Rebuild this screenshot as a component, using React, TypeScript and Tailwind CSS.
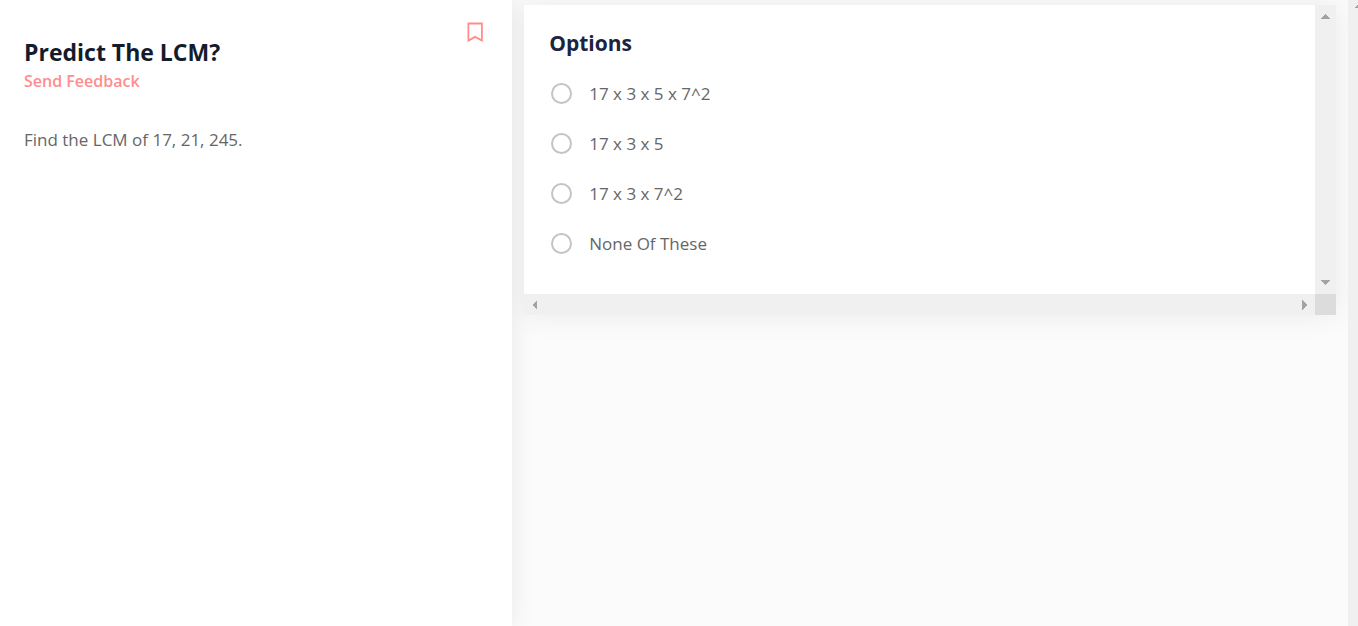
import { useState } from "react";

const options = ["17 x 3 x 5 x 7^2", "17 x 3 x 5", "17 x 3 x 7^2", "None Of These"];

function Arrow({ points, className = "" }: { points: string; className?: string }) {
  return (
    <svg
      viewBox="0 0 10 10"
      className={`size-[10px] shrink-0 fill-[#a3a3a3] ${className}`}
      shapeRendering="crispEdges"
      aria-hidden="true"
    >
      <polygon points={points} />
    </svg>
  );
}

function QuestionPanel() {
  const [saved, setSaved] = useState(false);
  return (
    <section className="flex w-[38%] shrink-0 items-start justify-between bg-white pt-[22px] pr-7 pl-6 shadow-[0_0_24px_rgba(0,0,0,0.08)]">
      <div className="pt-[14px]">
        <h1 className="text-[23px] leading-8 font-bold text-[#141c2c]">Predict The LCM?</h1>
        <a href="#feedback" className="block text-[16px] leading-[26px] font-semibold text-[#ff8d8d]">
          Send Feedback
        </a>
        <p className="mt-[34px] text-[17px] leading-6 text-[#666]">Find the LCM of 17, 21, 245.</p>
      </div>
      <button type="button" aria-label="Bookmark" aria-pressed={saved} onClick={() => setSaved(!saved)}>
        <svg
          viewBox="0 0 18 21"
          className={`h-[21px] w-[18px] stroke-[#ff8d8d] ${saved ? "fill-[#ff8d8d]" : "fill-none"}`}
          strokeWidth="1.8"
        >
          <path d="M2.4 1.5H15.9V18.6L9.1 14.9L2.4 18.6Z" />
        </svg>
      </button>
    </section>
  );
}

function OptionsCard() {
  return (
    <div className="grid grid-cols-[1fr_21px] grid-rows-[1fr_21px] bg-white shadow-[0_0_28px_rgba(0,0,0,0.07)]">
      <fieldset className="px-[25px] pt-[22px] pb-[26px]">
        <legend className="float-left w-full text-[21px] leading-8 font-bold text-[#1b2440]">Options</legend>
        <div className="clear-both pt-[9px]">
          {options.map((option) => (
            <label key={option} className="flex h-[50px] cursor-pointer items-center gap-[17px] pl-[2px] text-[17px] leading-[25px] text-[#666]">
              <input
                type="radio"
                name="answer"
                value={option}
                className="size-[21px] shrink-0 appearance-none rounded-full border-2 border-[#c4c4c4] bg-white checked:border-[6px] checked:border-[#ff8d8d]"
              />
              {option}
            </label>
          ))}
        </div>
      </fieldset>
      <div className="flex flex-col items-start justify-between bg-[#f0f0f0] pt-[6px] pb-[7px] pl-[5px]">
        <Arrow points="0,8 10,8 5,3" />
        <Arrow points="0,3 10,3 5,8" />
      </div>
      <div className="flex items-start justify-between bg-[#f0f0f0] px-[6px] pt-[6px]">
        <Arrow points="7,0 7,10 2,5" />
        <Arrow points="3,0 3,10 8,5" />
      </div>
      <div className="bg-[#dcdcdc]" />
    </div>
  );
}

export default function App() {
  return (
    <div className="flex min-h-screen overflow-hidden bg-[#fbfbfb] font-['Open_Sans',sans-serif]">
      <div className="flex grow">
        <QuestionPanel />
        <main className="relative grow overflow-hidden px-3 pt-[5px]">
          <OptionsCard />
        </main>
      </div>
      <div className="relative w-[10px] shrink-0 overflow-hidden bg-[#f0f0f0]">
        <Arrow points="0,8 10,8 5,3" className="ml-[6px]" />
      </div>
    </div>
  );
}
